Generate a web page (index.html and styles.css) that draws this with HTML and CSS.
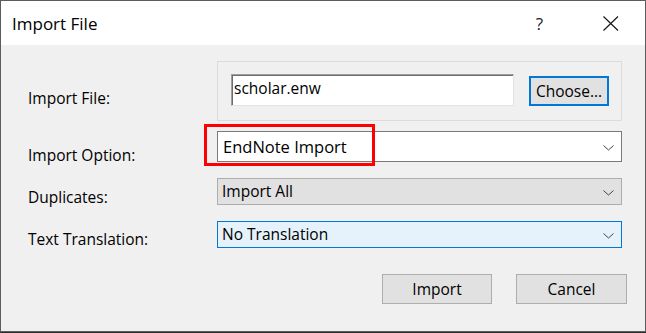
FILE: index.html
```html
<!DOCTYPE html>
<html lang="en">
<head>
<meta charset="UTF-8">
<title>Import File</title>
<link rel="stylesheet" href="styles.css">
</head>
<body>
  <div class="window">
    <div class="titlebar">
      <span class="title">Import File</span>
      <span class="help">?</span>
      <svg class="close" width="16" height="15" viewBox="0 0 16 15">
        <path d="M0.5 0.5 L15 14.5 M15 0.5 L0.5 14.5" stroke="#111" stroke-width="1.1" fill="none"/>
      </svg>
    </div>
    <div class="content">
      <div class="row row-file">
        <span class="label">Import File:</span>
        <div class="groupbox">
          <div class="edit">scholar.enw</div>
          <button class="btn btn-choose">Choose...</button>
        </div>
      </div>
      <div class="row row-option">
        <span class="label">Import Option:</span>
        <div class="combo combo-white">
          <span class="combo-text big">EndNote Import</span>
          <svg class="chev" width="11" height="6" viewBox="0 0 11 6"><path d="M0.5 0.5 L5.5 5 L10.5 0.5" stroke="#444" fill="none"/></svg>
          <div class="highlight"></div>
        </div>
      </div>
      <div class="row row-dup">
        <span class="label">Duplicates:</span>
        <div class="combo combo-gray">
          <span class="combo-text">Import All</span>
          <svg class="chev" width="11" height="6" viewBox="0 0 11 6"><path d="M0.5 0.5 L5.5 5 L10.5 0.5" stroke="#444" fill="none"/></svg>
        </div>
      </div>
      <div class="row row-trans">
        <span class="label">Text Translation:</span>
        <div class="combo combo-focus">
          <span class="combo-text">No Translation</span>
          <svg class="chev" width="11" height="6" viewBox="0 0 11 6"><path d="M0.5 0.5 L5.5 5 L10.5 0.5" stroke="#444" fill="none"/></svg>
        </div>
      </div>
      <div class="actions">
        <button class="btn btn-action">Import</button>
        <button class="btn btn-action btn-cancel">Cancel</button>
      </div>
    </div>
  </div>
</body>
</html>
```
FILE: styles.css
```css
body {
  margin: 0;
  background: #2e2e2e;
  font-family: "Open Sans", "Noto Sans", sans-serif;
  font-size: 15.5px;
  color: #000;
}
.window {
  width: 646px;
  height: 332px;
  box-sizing: border-box;
  border: 1px solid #5c5c5c;
  background: #f0f0f0;
  display: flex;
  flex-direction: column;
}
.titlebar {
  height: 44px;
  background: #fff;
  display: flex;
  align-items: center;
  padding-left: 11px;
}
.title {
  font-size: 17px;
  flex: 1;
  margin-top: 1px;
}
.help {
  font-size: 17px;
  color: #222;
  margin-right: 60px;
  margin-top: 1px;
}
.close {
  margin-right: 26px;
  margin-top: 1px;
}
.content {
  padding: 16px 0 0 27px;
}
.row {
  display: flex;
  align-items: flex-start;
}
.label {
  width: 189px;
  line-height: 20px;
}
.row-file { height: 60px; }
.row-file .label { margin-top: 27px; }
.row-option { height: 31px; margin-top: 10px; }
.row-option .label { margin-top: 14px; }
.row-dup { height: 27px; margin-top: 16px; }
.row-dup .label { margin-top: 9px; }
.row-trans { height: 27px; margin-top: 16px; }
.row-trans .label { margin-top: 8px; }
.groupbox {
  width: 405px;
  height: 60px;
  box-sizing: border-box;
  border: 1px solid #dcdcdc;
  display: flex;
  align-items: flex-start;
  padding: 12px 0 0 13px;
}
.edit {
  width: 283px;
  height: 32px;
  box-sizing: border-box;
  border: 1px solid;
  border-color: #a0a0a0 #e3e3e3 #e3e3e3 #a0a0a0;
  box-shadow: inset 1px 1px 0 #6d6d6d;
  background: #fff;
  padding: 1px 0 0 2px;
  line-height: 24px;
}
.btn {
  font-family: inherit;
  font-size: 15.5px;
  color: #000;
  background: #e1e1e1;
  border: 1px solid #adadad;
  padding: 0;
  margin: 0;
}
.btn-choose {
  width: 80px;
  height: 30px;
  margin: 2px 0 0 15px;
  border: 2px solid #0078d7;
  line-height: 24px;
}
.combo {
  position: relative;
  width: 405px;
  height: 27px;
  box-sizing: border-box;
  border: 1px solid #adadad;
  display: flex;
  align-items: center;
  padding: 0 7px 0 4px;
}
.combo-text {
  flex: 1;
  margin-top: -1px;
}
.combo-text.big {
  font-size: 16.5px;
}
.combo-white {
  height: 31px;
  background: #fff;
  border-color: #7a7a7a;
  padding-left: 5px;
}
.combo-gray {
  background: #e1e1e1;
}
.combo-focus {
  background: #e5f1fb;
  border-color: #0078d7;
}
.chev {
  margin-top: 2px;
}
.highlight {
  position: absolute;
  left: -14px;
  top: -8px;
  width: 171px;
  height: 42px;
  box-sizing: border-box;
  border: 3px solid #f00;
}
.actions {
  display: flex;
  justify-content: flex-end;
  gap: 24px;
  margin-top: 26px;
  padding-right: 18px;
}
.btn-action {
  width: 110px;
  height: 30px;
}
.btn-cancel {
  width: 111px;
}
```
